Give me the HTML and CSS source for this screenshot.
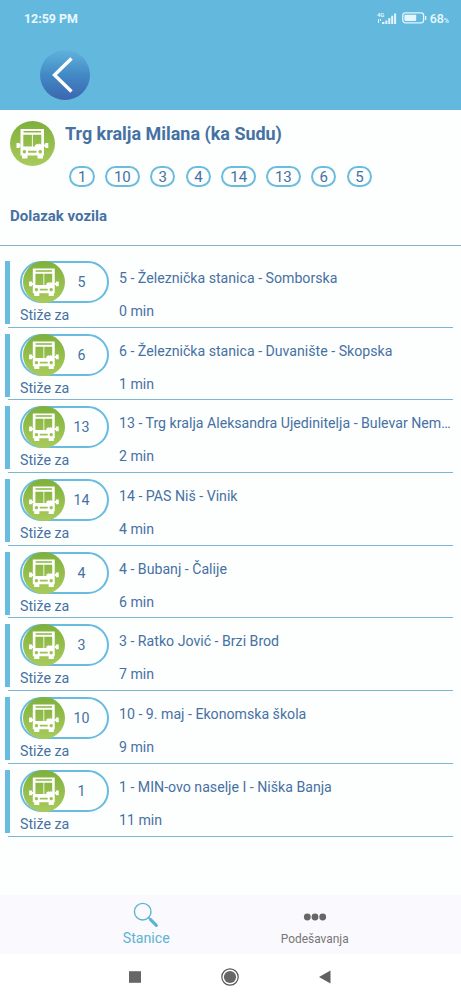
FILE: index.html
```
<!DOCTYPE html>
<html lang="sr-Latn">
<head>
  <meta charset="UTF-8" />
  <meta name="viewport" content="width=device-width, initial-scale=1" />
  <title>Dolazak vozila</title>
  <link rel="stylesheet" href="styles.css">
</head>
<body>
  <svg class="defs" width="0" height="0">
    <defs>
      <linearGradient id="green" x1="0" y1="0" x2="0" y2="1">
        <stop offset="0" stop-color="#7fb03c" />
        <stop offset="1" stop-color="#a9cb5c" />
      </linearGradient>
      <symbol id="bus" viewBox="0 0 45 45">
        <circle cx="22.5" cy="22.5" r="22.5" fill="url(#green)" />
        <path fill="#fff" fill-rule="evenodd" d="M10.5 8H34V34.6H33V37.6H27.5V34.6H17.5V37.6H12V34.6H10.5ZM13.5 10V11.5H31V10ZM13.3 13.7V25.6H21.9V13.7ZM22.8 13.7V25.6H31.3V13.7ZM14.4 28.9a1.8 1.8 0 1 0 .01 0ZM30.2 28.9a1.8 1.8 0 1 0 .01 0ZM18 29.7V31.7H26.5V29.7Z" />
        <path fill="#fff" d="M6.5 22H9.7V23.6H10.7V25.6H9.7V27H6.5ZM38.3 22H35.2V23.6H34V25.6H35.2V27H38.3ZM25 26V24.2L27.2 22.8L28.7 23.5L29.7 22.6L32 24V26Z" />
      </symbol>
    </defs>
  </svg>

  <header class="top">
    <div class="status">
      <span class="clock">12:59 PM</span>
      <svg class="signal" width="20" height="13" viewBox="0 0 20 13" fill="#e4f5fc">
        <text x="0" y="5" class="network">4G</text>
        <path d="M1 7H2V11H1ZM3 7H4V9H3ZM5 10H7.5V12H5ZM8.4 8.4H10.4V12H8.4ZM11.3 6H13.3V12H11.3ZM14.2 3.7H16.2V12H14.2ZM17.1 1.5H19.1V12H17.1Z" />
      </svg>
      <svg class="battery" width="25" height="12" viewBox="0 0 25 12">
        <rect x=".8" y=".8" width="20.8" height="10" rx="2.5" fill="none" stroke="#e4f5fc" stroke-width="1.3" />
        <rect x="2.4" y="2.7" width="11.8" height="6.2" rx=".8" fill="#e4f5fc" />
        <rect x="23" y="4" width="1.3" height="4" fill="#e4f5fc" />
      </svg>
      <span class="percent">68<small>%</small></span>
    </div>
    <button class="back" aria-label="Nazad">
      <svg width="50" height="50" viewBox="0 0 50 50">
        <path d="M31.5 8.5L14.5 25L31.5 41.5" fill="none" stroke="#fff" stroke-width="3.4" />
      </svg>
    </button>
  </header>

  <section class="station">
    <svg class="station-icon"><use href="#bus" /></svg>
    <div>
      <h1>Trg kralja Milana (ka Sudu)</h1>
      <div class="lines">
        <span>1</span>
        <span class="wide">10</span>
        <span>3</span>
        <span>4</span>
        <span class="wide">14</span>
        <span class="wide">13</span>
        <span>6</span>
        <span>5</span>
      </div>
    </div>
  </section>
  <h2>Dolazak vozila</h2>

  <main class="arrivals">
    <div class="arrival">
      <div class="vehicle">
        <div class="pill"><svg><use href="#bus" /></svg><span>5</span></div>
        <p>Stiže za</p>
      </div>
      <div class="route">
        <p class="name">5 - Železnička stanica - Somborska</p>
        <p class="time">0 min</p>
      </div>
    </div>
    <div class="arrival">
      <div class="vehicle">
        <div class="pill"><svg><use href="#bus" /></svg><span>6</span></div>
        <p>Stiže za</p>
      </div>
      <div class="route">
        <p class="name">6 - Železnička stanica - Duvanište - Skopska</p>
        <p class="time">1 min</p>
      </div>
    </div>
    <div class="arrival">
      <div class="vehicle">
        <div class="pill"><svg><use href="#bus" /></svg><span>13</span></div>
        <p>Stiže za</p>
      </div>
      <div class="route">
        <p class="name">13 - Trg kralja Aleksandra Ujedinitelja - Bulevar Nem…</p>
        <p class="time">2 min</p>
      </div>
    </div>
    <div class="arrival">
      <div class="vehicle">
        <div class="pill"><svg><use href="#bus" /></svg><span>14</span></div>
        <p>Stiže za</p>
      </div>
      <div class="route">
        <p class="name">14 - PAS Niš - Vinik</p>
        <p class="time">4 min</p>
      </div>
    </div>
    <div class="arrival">
      <div class="vehicle">
        <div class="pill"><svg><use href="#bus" /></svg><span>4</span></div>
        <p>Stiže za</p>
      </div>
      <div class="route">
        <p class="name">4 - Bubanj - Čalije</p>
        <p class="time">6 min</p>
      </div>
    </div>
    <div class="arrival">
      <div class="vehicle">
        <div class="pill"><svg><use href="#bus" /></svg><span>3</span></div>
        <p>Stiže za</p>
      </div>
      <div class="route">
        <p class="name">3 - Ratko Jović - Brzi Brod</p>
        <p class="time">7 min</p>
      </div>
    </div>
    <div class="arrival">
      <div class="vehicle">
        <div class="pill"><svg><use href="#bus" /></svg><span>10</span></div>
        <p>Stiže za</p>
      </div>
      <div class="route">
        <p class="name">10 - 9. maj - Ekonomska škola</p>
        <p class="time">9 min</p>
      </div>
    </div>
    <div class="arrival">
      <div class="vehicle">
        <div class="pill"><svg><use href="#bus" /></svg><span>1</span></div>
        <p>Stiže za</p>
      </div>
      <div class="route">
        <p class="name">1 - MIN-ovo naselje I - Niška Banja</p>
        <p class="time">11 min</p>
      </div>
    </div>
  </main>

  <nav class="tabs">
    <a class="tab active">
      <svg width="26" height="26" viewBox="0 0 26 26" fill="none" stroke="#5db4d2">
        <circle cx="9.7" cy="9.7" r="8.3" stroke-width="1.4" />
        <path d="M15.5 15.5L18 18" stroke-width="1.8" />
        <path d="M17.8 17.8L23.3 23.3" stroke-width="3.2" stroke-linecap="round" />
      </svg>
      <span>Stanice</span>
    </a>
    <a class="tab">
      <svg width="24" height="26" viewBox="0 0 24 26" fill="#666">
        <circle cx="4.3" cy="15" r="3.4" />
        <circle cx="12" cy="15" r="3.4" />
        <circle cx="19.7" cy="15" r="3.4" />
      </svg>
      <span>Podešavanja</span>
    </a>
  </nav>

  <footer class="system">
    <svg width="20" height="20" viewBox="0 0 20 20"><rect x="4" y="4.2" width="12" height="11.6" fill="#666" /></svg>
    <svg width="20" height="20" viewBox="0 0 20 20">
      <circle cx="10" cy="10" r="8.2" fill="none" stroke="#555" stroke-width="1.2" />
      <circle cx="10" cy="10" r="6.1" fill="#666" />
    </svg>
    <svg width="20" height="20" viewBox="0 0 20 20"><path d="M15.5 3.5V16.5L4 10Z" fill="#606060" /></svg>
  </footer>
</body>
</html>
```
FILE: styles.css
```
* {
  box-sizing: border-box;
}
body {
  font-family: Roboto, "Noto Sans", sans-serif;
  background: #fdfefe;
  margin: 0;
  height: 1000px;
  color: #4671a3;
  display: flex;
  flex-direction: column;
  overflow: hidden;
}
h1, h2, p {
  margin: 0;
}
svg {
  display: block;
  flex: none;
}
.defs {
  position: absolute;
}
.top {
  height: 110px;
  background: #63b8dd;
  flex: none;
}
.status {
  height: 36px;
  padding: 0 12px 0 24px;
  display: flex;
  align-items: center;
  color: #e9f8fd;
}
.clock {
  font-size: 12.4px;
  font-weight: 700;
  margin-right: auto;
}
.network {
  font-size: 5.8px;
  font-weight: 700;
}
.battery {
  margin: 0 3px 0 5px;
}
.percent {
  font-size: 12.5px;
  font-weight: 500;
}
.percent small {
  font-size: 7px;
}
.back {
  display: block;
  width: 50px;
  height: 50px;
  margin: 14px 0 0 40px;
  padding: 0;
  border: none;
  border-radius: 50%;
  background: linear-gradient(#60b2dc, #4289c6 50%, #3c66ae);
}
.station {
  display: flex;
  gap: 10px;
  padding: 11px 10px 0;
  height: 92px;
}
.station-icon {
  width: 45px;
  height: 45px;
}
h1 {
  font-size: 17.95px;
  font-weight: 700;
  line-height: 25px;
}
.lines {
  display: flex;
  gap: 10.3px;
  margin: 20px 0 0 4.4px;
}
.lines span {
  width: 25.5px;
  height: 21px;
  border: 2px solid #6cbddd;
  border-radius: 11px;
  font-size: 15px;
  line-height: 19px;
  text-align: center;
}
.lines .wide {
  width: 34.4px;
}
h2 {
  height: 44px;
  padding: 4px 10px 0;
  border-bottom: 1px solid #85b7c2;
  font-size: 15px;
  font-weight: 700;
  line-height: 20px;
}
.arrivals {
  padding-top: 9px;
  flex: 1;
}
.arrival {
  height: 72.7px;
  margin: 0 8px;
  display: flex;
  gap: 10px;
  padding-top: 6px;
  border-bottom: 1px solid #7eb5d2;
}
.vehicle {
  width: 104px;
  height: 63px;
  margin-left: -3px;
  padding-left: 10px;
  border-left: 5px solid #67bce0;
  flex: none;
}
.pill {
  width: 89px;
  height: 42px;
  border: 2px solid #67bce0;
  border-radius: 21px;
  display: flex;
  align-items: center;
}
.pill svg {
  width: 42px;
  height: 42px;
  margin-left: 0.6px;
}
.pill span {
  width: 34px;
  font-size: 14.2px;
  text-align: center;
}
.vehicle p {
  font-size: 14.2px;
  line-height: 20px;
  margin-top: 2px;
}
.route {
  min-width: 0;
  font-size: 14.15px;
}
.name {
  line-height: 20px;
  margin-top: 7px;
  white-space: nowrap;
}
.time {
  line-height: 20px;
  margin-top: 13px;
}
.tabs {
  height: 59px;
  background: #faf9fd;
  display: flex;
  padding: 0 62px;
  flex: none;
}
.tab {
  flex: 1;
  display: flex;
  flex-direction: column;
  align-items: center;
  padding-top: 7px;
  color: #777;
  font-size: 11.9px;
}
.tab span {
  line-height: 22px;
}
.active {
  color: #5db4d2;
  font-size: 14.2px;
}
.active span {
  line-height: 21px;
}
.system {
  height: 46px;
  padding: 0 126px 0 125px;
  display: flex;
  justify-content: space-between;
  align-items: center;
  background: #fff;
  flex: none;
}
```
